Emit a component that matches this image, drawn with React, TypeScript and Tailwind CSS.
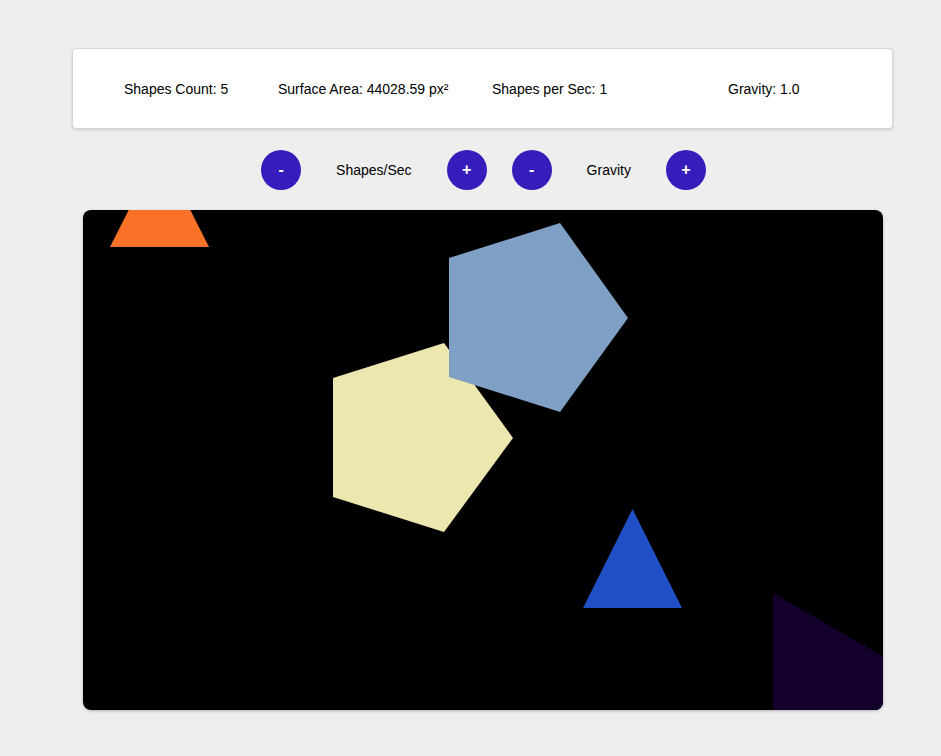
import React from "react";

const stats = [
  "Shapes Count: 5",
  "Surface Area: 44028.59 px²",
  "Shapes per Sec: 1",
  "Gravity: 1.0",
];

function RoundButton({ label }: { label: string }) {
  return (
    <button className="w-10 h-10 rounded-full bg-[#361dbb] text-white font-bold text-base flex items-center justify-center leading-none">
      {label}
    </button>
  );
}

export default function App() {
  return (
    <div className="min-h-[756px] bg-[#eeeeee] font-['Liberation_Sans',Arial,sans-serif] text-sm text-black pt-12">
      <div className="ml-[72px] w-[821px] flex flex-col items-center">
        <div className="w-full h-[81px] bg-white rounded-[4px] border border-[#d6d6d6] shadow-[0_1px_3px_rgba(0,0,0,0.15)] grid grid-cols-[154px_214px_236px_1fr] items-center pl-[51px]">
          {stats.map((s) => (
            <div key={s}>{s}</div>
          ))}
        </div>

        <div className="flex items-center gap-[25px] mt-[21px] ml-[2px]">
          <RoundButton label="-" />
          <span className="mx-[10px]">Shapes/Sec</span>
          <RoundButton label="+" />
          <RoundButton label="-" />
          <span className="mx-[10px]">Gravity</span>
          <RoundButton label="+" />
        </div>

        <div className="relative mt-5 w-[800px] h-[500px] bg-black rounded-lg overflow-hidden shadow-[0_1px_3px_rgba(0,0,0,0.25)]">
          <svg width="800" height="500" viewBox="0 0 800 500" className="block">
            <polygon points="76.5,-61 27,37 126,37" fill="#fa7228" />
            <polygon points="250,168 361,133 430,228 361,322 250,287" fill="#ece6af" />
            <polygon points="366,48 477,13 545,108 477,202 366,167" fill="#7f9fc4" />
            <polygon points="549.5,299 500,398 599,398" fill="#1f50c6" />
            <polygon points="690,383 690,583 863,483" fill="#13002b" />
          </svg>
        </div>
      </div>
    </div>
  );
}
